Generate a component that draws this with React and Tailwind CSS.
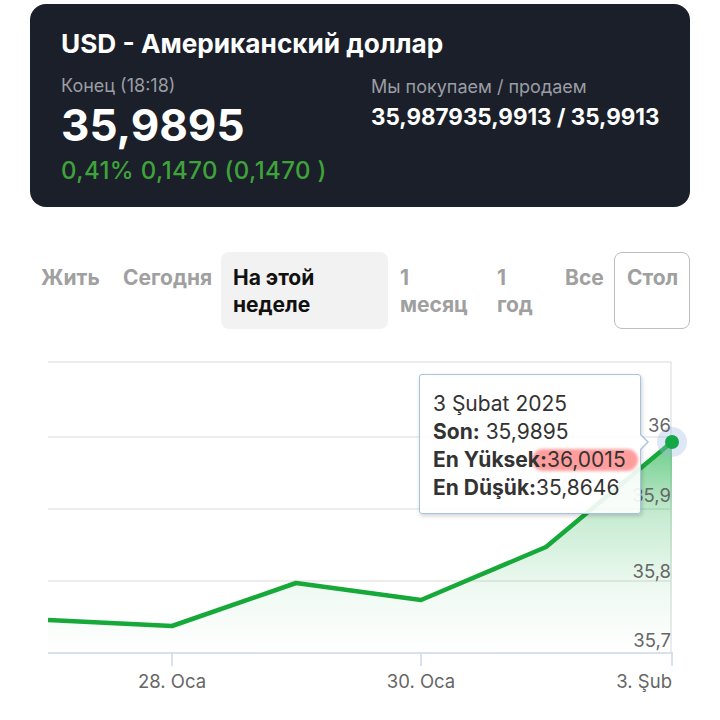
import React from "react";

const font = { fontFamily: "Inter, Roboto, 'Noto Sans', sans-serif" };

function Chart() {
  const pts = [
    [48, 620],
    [172, 626],
    [296, 583],
    [421, 600],
    [546, 547],
    [672, 442],
  ];
  const line = pts.map((p, i) => (i === 0 ? "M" : "L") + p[0] + " " + p[1]).join(" ");
  const area = line + " L672 653 L48 653 Z";
  return (
    <svg width="720" height="380" viewBox="0 340 720 380" className="block">
      <defs>
        <linearGradient id="g" x1="0" y1="442" x2="0" y2="653" gradientUnits="userSpaceOnUse">
          <stop offset="0" stopColor="#1fb14a" stopOpacity="0.65" />
          <stop offset="0.35" stopColor="#1fb14a" stopOpacity="0.25" />
          <stop offset="0.7" stopColor="#1fb14a" stopOpacity="0.07" />
          <stop offset="1" stopColor="#1fb14a" stopOpacity="0" />
        </linearGradient>
      </defs>
      {[362, 437, 509, 581].map((y) => (
        <line key={y} x1="48" x2="671" y1={y} y2={y} stroke="#e6e6e6" strokeWidth="1.5" />
      ))}
      <line x1="671" x2="671" y1="362" y2="653" stroke="#e0e0e0" strokeWidth="1.2" />
      <path d={area} fill="url(#g)" />
      <line x1="48" x2="673" y1="653" y2="653" stroke="#ccd6eb" strokeWidth="1.5" />
      {[172, 421, 672].map((x) => (
        <line key={x} x1={x} x2={x} y1="653" y2="666" stroke="#ccd6eb" strokeWidth="1.5" />
      ))}
      <path d={line} fill="none" stroke="#17a83a" strokeWidth="4.5" strokeLinejoin="round" />
      <circle cx="672" cy="442" r="15" fill="#9dbbe3" fillOpacity="0.35" />
      <circle cx="672" cy="442" r="7" fill="#12a845" />
      <g fill="#666666" fontSize="18.5" style={font}>
        <text x="671" y="432" textAnchor="end">36</text>
        <text x="671" y="502" textAnchor="end">35,9</text>
        <text x="671" y="578" textAnchor="end">35,8</text>
        <text x="671" y="647" textAnchor="end">35,7</text>
        <text x="172" y="688" textAnchor="middle">28. Oca</text>
        <text x="421" y="688" textAnchor="middle">30. Oca</text>
        <text x="672" y="688" textAnchor="end">3. Şub</text>
      </g>
    </svg>
  );
}

export default function App() {
  return (
    <div className="w-[720px] h-[720px] bg-white overflow-hidden" style={font}>
      <div className="mx-[30px] mt-[4px] h-[203px] rounded-[16px] bg-[#1b1f29] pl-[31px] pt-[24px]">
        <div className="text-[26.2px] leading-[32px] font-bold text-white">USD - Американский доллар</div>
        <div className="flex">
          <div className="w-[310px]">
            <div className="mt-[14px] text-[18px] leading-[24px] text-[#9a9da4]">Конец (18:18)</div>
            <div className="mt-[2px] text-[44px] leading-[50px] font-bold text-white">35,9895</div>
            <div className="mt-[6px] text-[24px] leading-[30px] font-medium tracking-[0.4px] text-[#3fa33b]">0,41% 0,1470 (0,1470 )</div>
          </div>
          <div>
            <div className="mt-[15px] text-[18px] leading-[24px] text-[#9a9da4]">Мы покупаем / продаем</div>
            <div className="mt-[3px] text-[22.4px] leading-[30px] font-bold text-white">35,987935,9913 / 35,9913</div>
          </div>
        </div>
      </div>

      <div className="mt-[45px] flex h-[77px] pl-[29px] text-[21px] leading-[27px] font-bold text-[#a0a0a0]">
        <div className="w-[82px] px-[12px] pt-[12px]">Жить</div>
        <div className="w-[110px] px-[12px] pt-[12px]">Сегодня</div>
        <div className="w-[167px] rounded-[8px] bg-[#f2f2f2] px-[12px] pt-[12px] text-[#111111]">
          На этой<br />неделе
        </div>
        <div className="w-[97px] px-[12px] pt-[12px]">1<br />месяц</div>
        <div className="w-[68px] px-[12px] pt-[12px]">1<br />год</div>
        <div className="w-[61px] px-[12px] pt-[12px]">Все</div>
        <div className="w-[76px] rounded-[8px] border border-[#bdbdbd] px-[12px] pt-[11px]">Стол</div>
      </div>

      <div className="relative mt-[11px]">
        <Chart />
        <div className="absolute left-[419px] top-[34px] w-[222px] h-[140px] rounded-[3px] border-[1.5px] border-[#a8c3e2] bg-white/90 shadow-[1px_2px_4px_rgba(0,0,0,0.18)] pl-[13px] pt-[15px] text-[21px] leading-[28px] text-[#333333]">
          <div>3 Şubat 2025</div>
          <div><span className="font-bold">Son:</span> 35,9895</div>
          <div className="relative">
            <span className="absolute left-[99px] top-[3px] h-[22px] w-[106px] rounded-full bg-[#ff4d4d]/55 blur-[1.5px]" />
            <span className="relative font-bold">En Yüksek:</span><span className="relative">36,0015</span>
          </div>
          <div><span className="font-bold">En Düşük:</span>35,8646</div>
          <div className="absolute right-[-9px] top-[58px] h-0 w-0 border-y-[9px] border-l-[9px] border-y-transparent border-l-[#a8c3e2]" />
          <div className="absolute right-[-7px] top-[60px] h-0 w-0 border-y-[7px] border-l-[7px] border-y-transparent border-l-white" />
        </div>
      </div>
    </div>
  );
}
